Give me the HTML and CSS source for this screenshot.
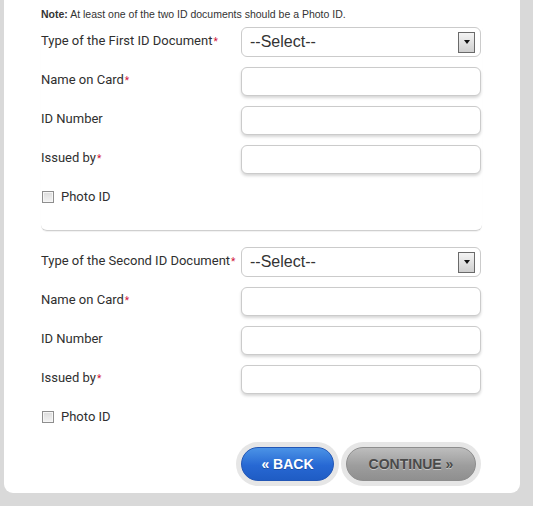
FILE: index.html
```html
<!DOCTYPE html>
<html>
<head>
<meta charset="utf-8">
<link rel="stylesheet" href="styles.css">
</head>
<body>
<div class="panel">
  <p class="note"><b>Note:</b> At least one of the two ID documents should be a Photo ID.</p>

  <div class="idset">
    <div class="row row-select">
      <label class="lbl">Type of the First ID Document<span class="req">*</span></label>
      <div class="select"><span>--Select--</span><span class="arrow"></span></div>
    </div>
    <div class="row">
      <label class="lbl">Name on Card<span class="req">*</span></label>
      <div class="input"></div>
    </div>
    <div class="row">
      <label class="lbl">ID Number</label>
      <div class="input"></div>
    </div>
    <div class="row">
      <label class="lbl">Issued by<span class="req">*</span></label>
      <div class="input"></div>
    </div>
    <label class="check"><input type="checkbox" class="box">Photo ID</label>
  </div>

  <div class="idset last">
    <div class="row row-select">
      <label class="lbl">Type of the Second ID Document<span class="req">*</span></label>
      <div class="select"><span>--Select--</span><span class="arrow"></span></div>
    </div>
    <div class="row">
      <label class="lbl">Name on Card<span class="req">*</span></label>
      <div class="input"></div>
    </div>
    <div class="row">
      <label class="lbl">ID Number</label>
      <div class="input"></div>
    </div>
    <div class="row">
      <label class="lbl">Issued by<span class="req">*</span></label>
      <div class="input"></div>
    </div>
    <label class="check"><input type="checkbox" class="box">Photo ID</label>
  </div>

  <div class="actions">
    <span class="ring"><span class="btn back">&laquo; BACK</span></span>
    <span class="ring"><span class="btn cont">CONTINUE &raquo;</span></span>
  </div>
</div>
</body>
</html>
```
FILE: styles.css
```css
html, body {
  margin: 0;
  padding: 0;
  background: #d9d9d9;
}
body {
  font-family: Roboto, "Liberation Sans", Arial, sans-serif;
  color: #2f2f2f;
}
.panel {
  margin-left: 4px;
  width: 479px;
  height: 487px;
  padding: 6px 0 0 37px;
  background: #fff;
  border-radius: 0 0 9px 9px;
}
.note {
  margin: 0;
  font-family: "Liberation Sans", Arial, sans-serif;
  font-size: 10.5px;
  line-height: 16px;
  color: #333;
}
.note b { font-weight: bold; }
.idset {
  width: 441px;
  margin-top: 5px;
  padding-bottom: 26px;
  border-bottom: 1px solid #cfcfcf;
  border-radius: 0 0 6px 6px;
  box-shadow: 0 1px 1px rgba(0,0,0,0.06);
}
.idset + .idset { margin-top: 16px; }
.idset.last {
  border-bottom: 0;
  box-shadow: none;
  padding-bottom: 0;
}
.row {
  display: grid;
  grid-template-columns: 200px 240px;
  align-items: center;
  height: 29px;
  margin-top: 10px;
}
.row-select {
  height: 30px;
  margin-top: 0;
  margin-bottom: 2px;
}
.lbl {
  font-size: 13px;
  color: #2f2f2f;
  position: relative;
  top: -2px;
}
.req {
  color: #d0103a;
  font-size: 10px;
  margin-left: 1px;
}
.input {
  height: 27px;
  border: 1px solid #cbcbcb;
  border-radius: 6px;
  box-shadow: 0 2px 3px rgba(0,0,0,0.16);
  background: #fff;
}
.select {
  height: 28px;
  border: 1px solid #cbcbcb;
  border-radius: 6px;
  display: flex;
  align-items: center;
  justify-content: space-between;
  padding: 0 5px 0 8px;
  font-family: "Liberation Sans", Arial, sans-serif;
  font-size: 16px;
  color: #333;
}
.arrow {
  width: 15px;
  height: 19px;
  border: 1px solid #6a6a6a;
  background: linear-gradient(#f4f4f4, #cfcfcf);
  display: flex;
  align-items: center;
  justify-content: center;
}
.arrow::after {
  content: "";
  border-left: 3.5px solid transparent;
  border-right: 3.5px solid transparent;
  border-top: 4px solid #111;
}
.check {
  display: flex;
  align-items: center;
  gap: 7px;
  margin-top: 14px;
  height: 16px;
  font-size: 13px;
  color: #2f2f2f;
}
.box {
  appearance: none;
  -webkit-appearance: none;
  margin: 1px 0 0 1px;
  width: 12px;
  height: 12px;
  border: 1px solid #8e8e8e;
  background: linear-gradient(#dcdcdc, #f3f3f3);
  box-shadow: inset 0 0 0 1px #f6f6f6;
}
.actions {
  width: 440px;
  margin-top: 18px;
  display: flex;
  justify-content: flex-end;
  gap: 2px;
}
.ring {
  display: inline-block;
  padding: 5px;
  background: #e6e6e6;
  border-radius: 24px;
}
.btn {
  display: flex;
  align-items: center;
  justify-content: center;
  height: 32px;
  border-radius: 18px;
  font-family: "Liberation Sans", Arial, sans-serif;
  font-weight: bold;
  font-size: 14px;
}
.back {
  width: 91px;
  color: #fff;
  background: linear-gradient(#4b93e6, #2768d3 55%, #1f5cc4);
  border: 1px solid #2256b5;
  text-shadow: 0 1px 0 rgba(0,0,0,0.25);
}
.cont {
  width: 128px;
  color: #4a4a4a;
  background: linear-gradient(#bdbdbd, #9d9d9d 55%, #8f8f8f);
  border: 1px solid #8d8d8d;
  text-shadow: 0 1px 0 rgba(255,255,255,0.45);
}
```
